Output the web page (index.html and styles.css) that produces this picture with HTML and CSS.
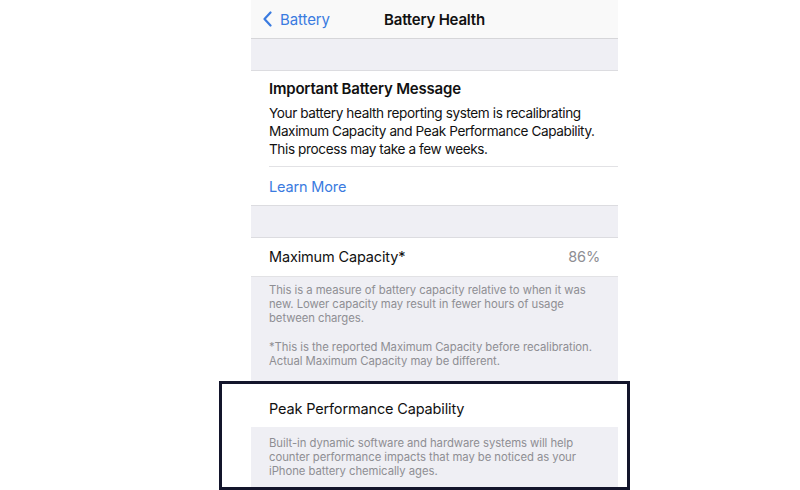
FILE: index.html
```html
<!DOCTYPE html>
<html lang="en">
<head>
    <meta charset="UTF-8">
    <meta name="viewport" content="width=device-width, initial-scale=1.0">
    <title>Battery Health</title>
    <link rel="stylesheet" href="styles.css">
</head>
<body>
    <div class="screen">
        <div class="nav-bar">
            <div class="nav-back">
                <svg width="9" height="16" viewBox="0 0 9 16"><path d="M7.5 1.5 L1.5 8 L7.5 14.5" fill="none" stroke="#3a7be0" stroke-width="2.2" stroke-linecap="round" stroke-linejoin="round"/></svg>
                <span>Battery</span>
            </div>
            <h1 class="nav-title">Battery Health</h1>
        </div>
        <div class="spacer"></div>
        <div class="group message">
            <div class="message-body">
                <h2>Important Battery Message</h2>
                <p>Your battery health reporting system is recalibrating Maximum Capacity and Peak Performance Capability. This process may take a few weeks.</p>
            </div>
            <div class="row link-row">Learn More</div>
        </div>
        <div class="spacer"></div>
        <div class="group">
            <div class="row value-row">
                <span>Maximum Capacity*</span>
                <span class="value">86%</span>
            </div>
        </div>
        <div class="footer-note">
            <p>This is a measure of battery capacity relative to when it was new. Lower capacity may result in fewer hours of usage between charges.</p>
            <p>*This is the reported Maximum Capacity before recalibration. Actual Maximum Capacity may be different.</p>
        </div>
        <div class="group">
            <div class="row peak-row">Peak Performance Capability</div>
        </div>
        <div class="footer-note last">
            <p>Built-in dynamic software and hardware systems will help counter performance impacts that may be noticed as your iPhone battery chemically ages.</p>
        </div>
    </div>
    <div class="highlight"></div>
</body>
</html>
```

FILE: styles.css
```css
body {
    margin: 0;
    background: #ffffff;
    font-family: 'Inter', 'Liberation Sans', sans-serif;
    color: #111111;
    height: 490px;
    overflow: hidden;
    position: relative;
}
.screen {
    width: 367px;
    margin-left: 251px;
    background: #efeff4;
    height: 490px;
}
.nav-bar {
    height: 38px;
    background: #f9f9f9;
    border-bottom: 1px solid #d6d6d9;
    display: flex;
    align-items: center;
    position: relative;
}
.nav-back {
    display: flex;
    align-items: center;
    gap: 8px;
    padding-left: 12px;
    color: #3a7be0;
    font-size: 15px;
    letter-spacing: -0.1px;
}
.nav-title {
    position: absolute;
    left: 0;
    right: 0;
    margin: 0;
    text-align: center;
    font-size: 15px;
    font-weight: 600;
    letter-spacing: -0.2px;
    pointer-events: none;
}
.spacer {
    height: 31px;
    border-bottom: 1px solid #dcdce0;
}
.group {
    background: #ffffff;
}
.message {
    border-bottom: 1px solid #dcdce0;
}
.message-body {
    margin-left: 18px;
    padding: 8px 18px 8px 0;
    border-bottom: 1px solid #e2e2e5;
}
.message-body h2 {
    margin: 0;
    font-size: 15px;
    font-weight: 600;
    line-height: 20px;
    letter-spacing: -0.2px;
}
.message-body p {
    margin: 5px 0 0;
    font-size: 13.6px;
    line-height: 18px;
    letter-spacing: -0.4px;
}
.row {
    height: 38px;
    display: flex;
    align-items: center;
    padding: 0 18px;
    font-size: 14.5px;
    letter-spacing: -0.15px;
}
.link-row {
    color: #3a7be0;
}
.value-row {
    justify-content: space-between;
    border-bottom: 1px solid #e2e2e5;
    height: 37px;
    padding-bottom: 1px;
}
.value {
    color: #8e8e93;
}
.peak-row {
    height: 38px;
    padding-top: 8px;
}
.footer-note {
    padding: 6px 18px 13px;
    color: #8e8e93;
    font-size: 11.3px;
    line-height: 14px;
    letter-spacing: -0.05px;
}
.footer-note p {
    margin: 0;
}
.footer-note p + p {
    margin-top: 15px;
}
.footer-note.last {
    padding-top: 9px;
}
.highlight {
    position: absolute;
    left: 219px;
    top: 381px;
    width: 411px;
    height: 109px;
    border: 3px solid #13152b;
    box-sizing: border-box;
    pointer-events: none;
}
```
